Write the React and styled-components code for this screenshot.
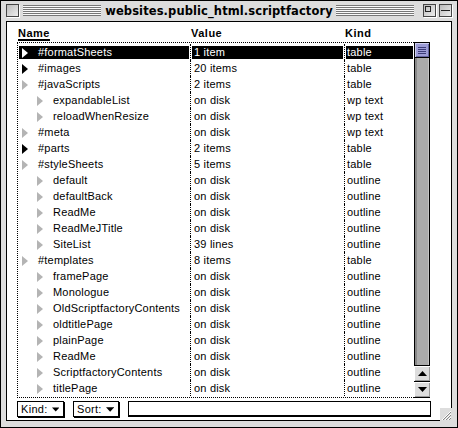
import React from "react";
import styled, { createGlobalStyle } from "styled-components";

const GlobalStyle = createGlobalStyle`
  html, body {
    margin: 0;
    padding: 0;
    background: #ffffff;
  }
  * { box-sizing: border-box; }
`;

const Window = styled.div`
  position: relative;
  width: 458px;
  height: 428px;
  border: 1px solid #000;
  background: #dddddd;
  display: flex;
  flex-direction: column;
  padding: 0 5px 6px 5px;
  font-family: "Liberation Sans", Arial, sans-serif;
  font-size: 11px;
  color: #000;
`;

const TitleBar = styled.div`
  height: 19px;
  display: flex;
  align-items: center;
  margin: 0 -4px;
  padding: 0 4px 0 4px;
`;

const BoxButton = styled.div`
  width: 13px;
  height: 13px;
  border: 1px solid #444;
  background: linear-gradient(135deg, #bbbbbb, #eeeeee);
  box-shadow: 1px 1px 0 #fff;
  position: relative;
  flex: none;
`;

const Stripes = styled.div`
  flex: 1;
  height: 11px;
  margin: 0 ${(p) => p.$gap || 4}px;
  background: repeating-linear-gradient(
    to bottom,
    #777 0px,
    #777 1px,
    #fafafa 1px,
    #fafafa 2px
  );
`;

const Title = styled.div`
  font-family: "DejaVu Sans", Verdana, sans-serif;
  font-weight: bold;
  font-size: 11.5px;
  letter-spacing: 0.1px;
  white-space: nowrap;
`;

const Content = styled.div`
  flex: 1;
  margin-top: 1px;
  border: 1px solid #000;
  background: #fff;
  display: flex;
  flex-direction: column;
  padding-left: 10px;
`;

const HeaderRow = styled.div`
  height: 20px;
  display: flex;
  align-items: center;
  padding-top: 1px;
`;

const HeaderCell = styled.div`
  width: ${(p) => p.$w}px;
  padding-left: ${(p) => p.$pad || 0}px;
  font-weight: bold;
  text-decoration: ${(p) => (p.$under ? "underline" : "none")};
  text-decoration-thickness: 1.5px;
  text-underline-offset: 2px;
  letter-spacing: 0.5px;
`;

const ListArea = styled.div`
  display: flex;
  height: 356px;
`;

const List = styled.div`
  width: 397px;
  border-top: 1px dotted #000;
  border-left: 1px dotted #000;
  border-bottom: 1px dotted #000;
  display: flex;
  flex-direction: column;
  padding-top: 1px;
`;

const Row = styled.div`
  display: flex;
  height: 16px;
`;

const Cell = styled.div`
  width: ${(p) => p.$w}px;
  border-right: ${(p) => (p.$sep ? "1px dotted #000" : "none")};
  padding: 2px 1px 1px 1px;
  display: flex;
`;

const CellInner = styled.div`
  flex: 1;
  display: flex;
  align-items: center;
  padding-left: ${(p) => p.$pad}px;
  padding-bottom: 2px;
  background: ${(p) => (p.$sel ? "#000" : "transparent")};
  color: ${(p) => (p.$sel ? "#fff" : "#000")};
  white-space: nowrap;
  overflow: hidden;
  letter-spacing: 0.2px;
`;

const Triangle = styled.span`
  width: 0;
  height: 0;
  border-top: 5px solid transparent;
  border-bottom: 5px solid transparent;
  border-left: 6px solid ${(p) => (p.$dark ? (p.$sel ? "#fff" : "#000") : "#b4b4b4")};
  margin-right: ${(p) => p.$gap}px;
  margin-top: 2px;
  flex: none;
`;

const Scrollbar = styled.div`
  width: 16px;
  border: 1px solid #000;
  display: flex;
  flex-direction: column;
  background: #aaaaaa;
  box-shadow: inset 2px 0 0 #888888, inset -1px 0 0 #c4c4c4;
`;

const Thumb = styled.div`
  height: 16px;
  margin: -1px -1px 0 -1px;
  border: 1px solid #000;
  background: #9c9cd6;
  box-shadow: inset 1px 1px 0 #cfcff0, inset -1px -1px 0 #6464a0;
  display: flex;
  align-items: center;
  justify-content: center;
`;

const Track = styled.div`
  flex: 1;
`;

const ArrowButton = styled.div`
  height: 16px;
  margin: 0 -1px;
  border-top: 1px solid #000;
  background: #dddddd;
  box-shadow: inset 1px 1px 0 #fff, inset -1px -1px 0 #999;
  display: flex;
  align-items: center;
  justify-content: center;
`;

const Footer = styled.div`
  display: flex;
  align-items: center;
  gap: 9px;
  margin-top: 3px;
`;

const Popup = styled.div`
  height: 16px;
  width: ${(p) => p.$w}px;
  border: 1px solid #000;
  box-shadow: 1px 1px 0 #000;
  background: #fff;
  display: flex;
  align-items: center;
  padding: 0 4px 0 3px;
  gap: 4px;
  font-size: 11px;
  letter-spacing: 0.3px;
`;

const TextField = styled.div`
  width: 303px;
  height: 16px;
  border: 1px solid #000;
  border-bottom-width: 2px;
  background: #fff;
`;

const GrowBox = styled.div`
  position: absolute;
  right: 5px;
  bottom: 6px;
  width: 12px;
  height: 13px;
  background: #dddddd;
`;

const rows = [
  { name: "#formatSheets", value: "1 item", kind: "table", level: 0, dark: true, sel: true },
  { name: "#images", value: "20 items", kind: "table", level: 0, dark: true },
  { name: "#javaScripts", value: "2 items", kind: "table", level: 0 },
  { name: "expandableList", value: "on disk", kind: "wp text", level: 1 },
  { name: "reloadWhenResize", value: "on disk", kind: "wp text", level: 1 },
  { name: "#meta", value: "on disk", kind: "wp text", level: 0 },
  { name: "#parts", value: "2 items", kind: "table", level: 0, dark: true },
  { name: "#styleSheets", value: "5 items", kind: "table", level: 0 },
  { name: "default", value: "on disk", kind: "outline", level: 1 },
  { name: "defaultBack", value: "on disk", kind: "outline", level: 1 },
  { name: "ReadMe", value: "on disk", kind: "outline", level: 1 },
  { name: "ReadMeJTitle", value: "on disk", kind: "outline", level: 1 },
  { name: "SiteList", value: "39 lines", kind: "outline", level: 1 },
  { name: "#templates", value: "8 items", kind: "table", level: 0 },
  { name: "framePage", value: "on disk", kind: "outline", level: 1 },
  { name: "Monologue", value: "on disk", kind: "outline", level: 1 },
  { name: "OldScriptfactoryContents", value: "on disk", kind: "outline", level: 1 },
  { name: "oldtitlePage", value: "on disk", kind: "outline", level: 1 },
  { name: "plainPage", value: "on disk", kind: "outline", level: 1 },
  { name: "ReadMe", value: "on disk", kind: "outline", level: 1 },
  { name: "ScriptfactoryContents", value: "on disk", kind: "outline", level: 1 },
  { name: "titlePage", value: "on disk", kind: "outline", level: 1 },
];

function DownArrow({ up }) {
  return (
    <svg width="9" height="5" viewBox="0 0 9 5">
      {up ? <polygon points="0,5 9,5 4.5,0" fill="#000" /> : <polygon points="0,0 9,0 4.5,5" fill="#000" />}
    </svg>
  );
}

export default function App() {
  return (
    <>
      <GlobalStyle />
      <Window>
        <TitleBar>
          <BoxButton />
          <Stripes $gap={4} />
          <Title>websites.public_html.scriptfactory</Title>
          <Stripes $gap={3} />
          <BoxButton style={{ marginLeft: 6 }}>
            <svg width="11" height="11" viewBox="0 0 11 11" style={{ position: "absolute", left: 0, top: 0 }}>
              <rect x="1.5" y="1.5" width="5" height="5" fill="none" stroke="#222" />
            </svg>
          </BoxButton>
          <BoxButton style={{ marginLeft: 3 }}>
            <svg width="11" height="11" viewBox="0 0 11 11" style={{ position: "absolute", left: 0, top: 0 }}>
              <line x1="1" y1="5.5" x2="10" y2="5.5" stroke="#222" />
            </svg>
          </BoxButton>
        </TitleBar>
        <Content>
          <HeaderRow>
            <HeaderCell $w={174} $pad={1} $under>Name</HeaderCell>
            <HeaderCell $w={154}>Value</HeaderCell>
            <HeaderCell $w={70}>Kind</HeaderCell>
          </HeaderRow>
          <ListArea>
            <List>
              {rows.map((r, i) => (
                <Row key={i}>
                  <Cell $w={173} $sep>
                    <CellInner $sel={r.sel} $pad={r.level ? 18 : 3}>
                      <Triangle $dark={r.dark} $sel={r.sel} $gap={10} />
                      {r.name}
                    </CellInner>
                  </Cell>
                  <Cell $w={154} $sep>
                    <CellInner $sel={r.sel} $pad={2}>{r.value}</CellInner>
                  </Cell>
                  <Cell $w={69}>
                    <CellInner $sel={r.sel} $pad={1}>{r.kind}</CellInner>
                  </Cell>
                </Row>
              ))}
            </List>
            <Scrollbar>
              <Thumb>
                <svg width="8" height="7" viewBox="0 0 8 7">
                  <line x1="0" y1="0.5" x2="8" y2="0.5" stroke="#3c3c78" />
                  <line x1="0" y1="2.5" x2="8" y2="2.5" stroke="#3c3c78" />
                  <line x1="0" y1="4.5" x2="8" y2="4.5" stroke="#3c3c78" />
                  <line x1="0" y1="6.5" x2="8" y2="6.5" stroke="#3c3c78" />
                </svg>
              </Thumb>
              <Track />
              <ArrowButton><DownArrow up /></ArrowButton>
              <ArrowButton><DownArrow /></ArrowButton>
            </Scrollbar>
          </ListArea>
          <Footer>
            <Popup $w={47}>Kind: <DownArrow /></Popup>
            <Popup $w={46}>Sort: <DownArrow /></Popup>
            <TextField />
          </Footer>
        </Content>
        <GrowBox>
          <svg width="12" height="13" viewBox="0 0 12 13">
            <line x1="2" y1="12" x2="11" y2="3" stroke="#fff" />
            <line x1="3" y1="12" x2="11" y2="4" stroke="#888" />
            <line x1="5" y1="12" x2="11" y2="6" stroke="#fff" />
            <line x1="6" y1="12" x2="11" y2="7" stroke="#888" />
            <line x1="8" y1="12" x2="11" y2="9" stroke="#fff" />
            <line x1="9" y1="12" x2="11" y2="10" stroke="#888" />
          </svg>
        </GrowBox>
      </Window>
    </>
  );
}
